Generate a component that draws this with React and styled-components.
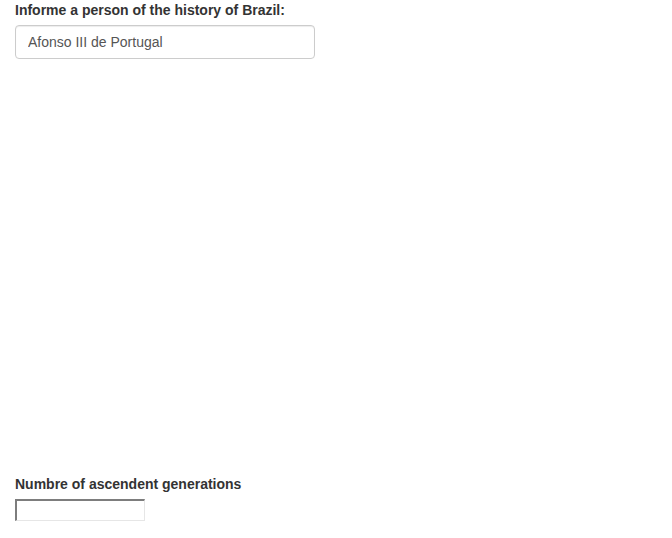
import React from 'react'
import styled, { createGlobalStyle } from 'styled-components'

const GlobalStyle = createGlobalStyle`
  html, body {
    margin: 0;
    padding: 0;
    background: #ffffff;
  }
  body {
    font-family: "Liberation Sans", Arial, sans-serif;
    font-size: 14px;
    line-height: 20px;
    color: #333333;
  }
`

const Page = styled.div`
  padding: 0 15px;
`

const FormGroup = styled.div`
  margin-bottom: 15px;
`

const Label = styled.label`
  display: block;
  font-weight: bold;
  font-size: 14px;
  line-height: 20px;
  color: #333333;
  margin-bottom: 5px;
`

const TextInput = styled.input`
  display: block;
  box-sizing: border-box;
  width: 300px;
  height: 34px;
  padding: 6px 12px;
  font-family: "Liberation Sans", Arial, sans-serif;
  font-size: 14px;
  line-height: 20px;
  color: #555555;
  background: #ffffff;
  border: 1px solid #cccccc;
  border-radius: 4px;
  box-shadow: inset 0 1px 1px rgba(0, 0, 0, 0.075);
  outline: none;
`

const PlotArea = styled.div`
  height: 400px;
`

const NumberInput = styled.input`
  display: block;
  box-sizing: border-box;
  width: 130px;
  height: 22px;
  padding: 1px 2px;
  font-family: "Liberation Sans", Arial, sans-serif;
  font-size: 13px;
  background: #ffffff;
  border-style: solid;
  border-width: 2px 1px 1px 2px;
  border-color: #7d7d7d #e6e6e6 #e6e6e6 #7d7d7d;
  outline: none;
  -moz-appearance: textfield;
  &::-webkit-inner-spin-button,
  &::-webkit-outer-spin-button {
    -webkit-appearance: none;
    margin: 0;
  }
`

const App = () => {
  const [person, setPerson] = React.useState('Afonso III de Portugal')
  const [generations, setGenerations] = React.useState('')

  return (
    <Page>
      <GlobalStyle />
      <FormGroup>
        <Label htmlFor="person">Informe a person of the history of Brazil:</Label>
        <TextInput
          id="person"
          type="text"
          value={person}
          onChange={(e) => setPerson(e.target.value)}
        />
      </FormGroup>
      <PlotArea />
      <FormGroup>
        <Label htmlFor="generations">Numbre of ascendent generations</Label>
        <NumberInput
          id="generations"
          type="number"
          value={generations}
          onChange={(e) => setGenerations(e.target.value)}
        />
      </FormGroup>
    </Page>
  )
}

export default App
